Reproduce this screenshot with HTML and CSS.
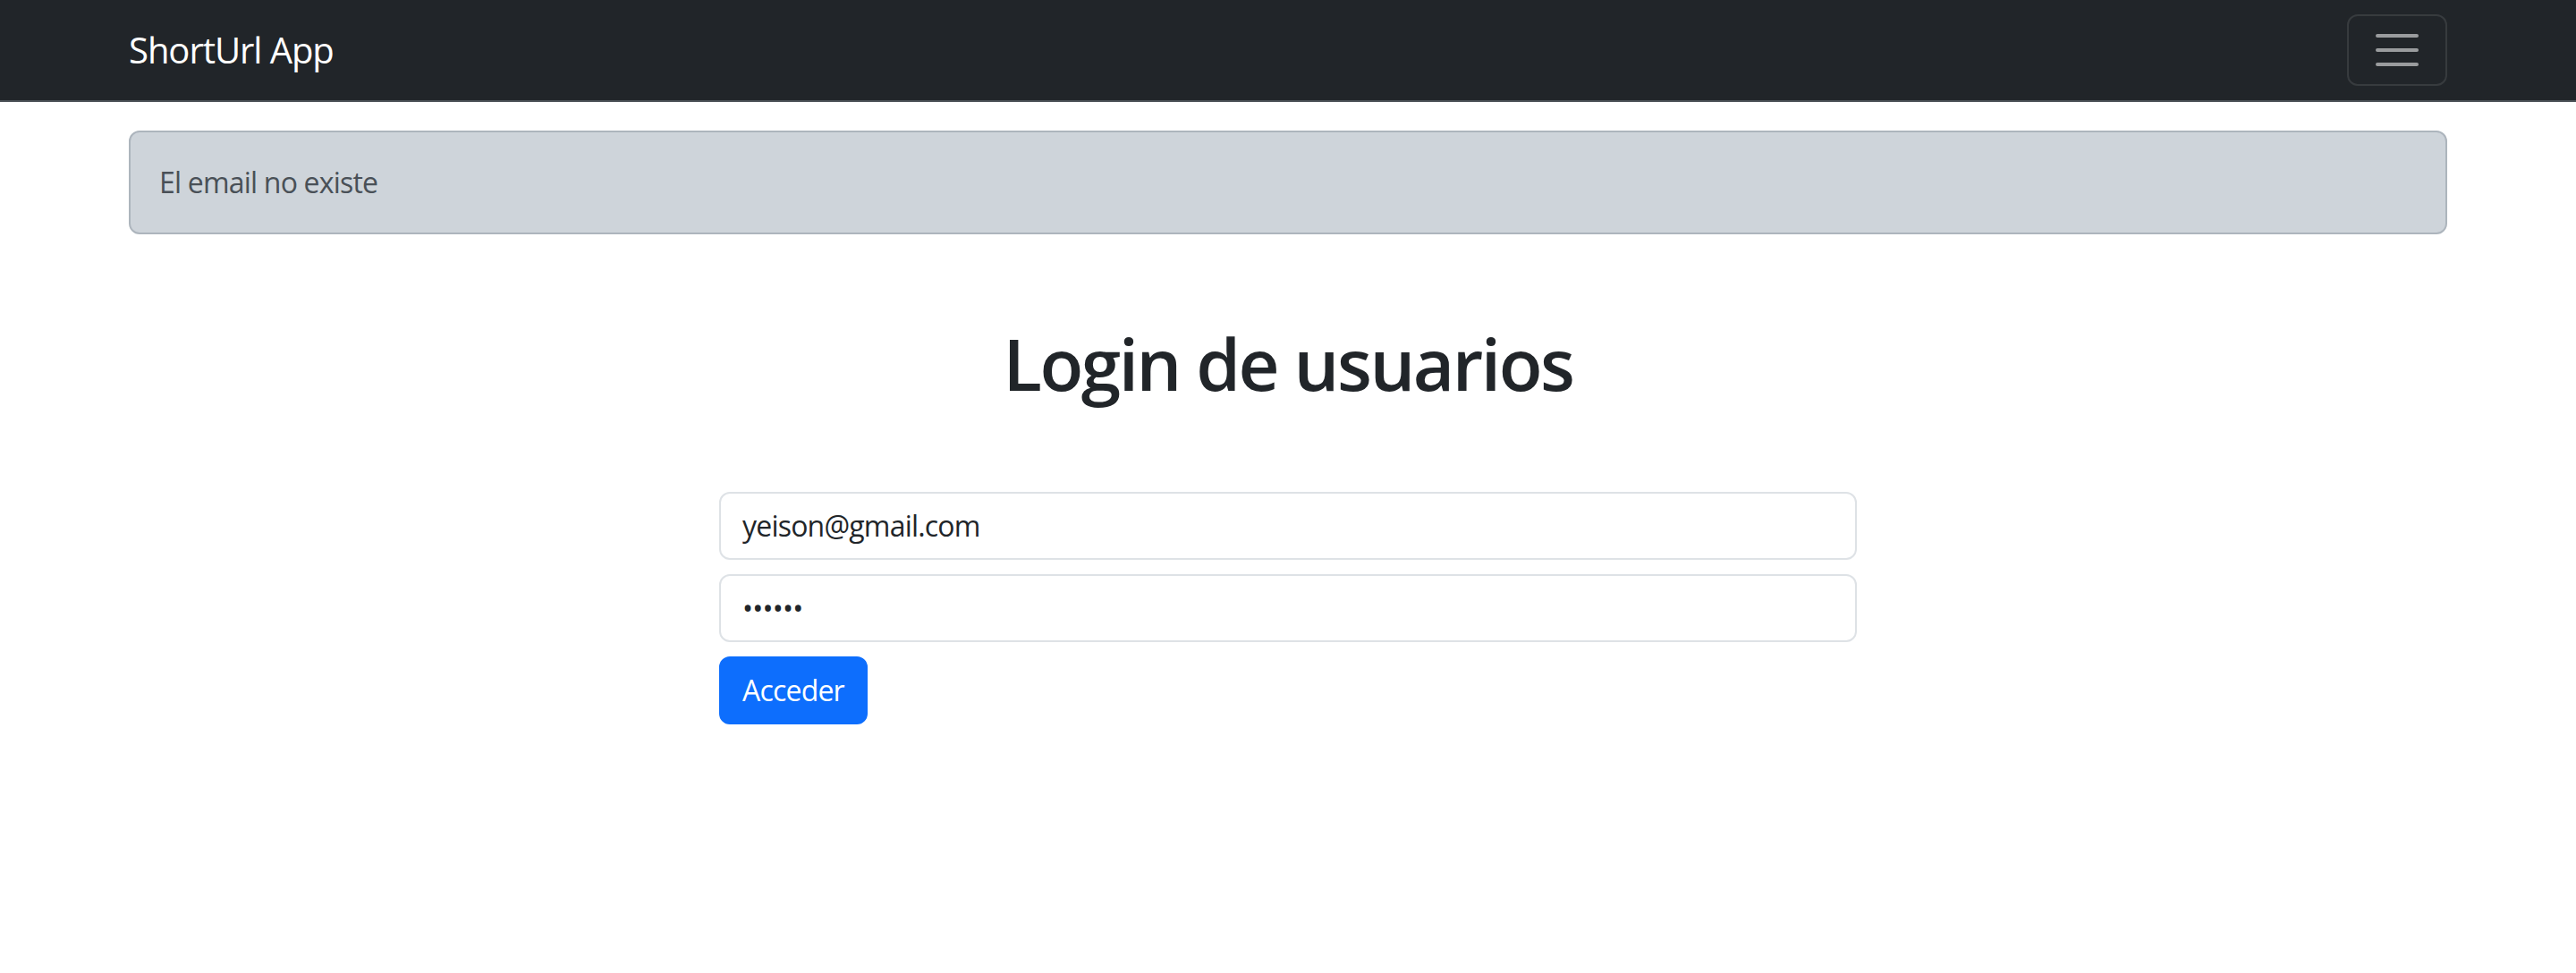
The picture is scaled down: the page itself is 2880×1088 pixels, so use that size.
FILE: index.html
```html
<!DOCTYPE html>
<html lang="es">
<head>
<meta charset="utf-8">
<title>ShortUrl App</title>
<link rel="stylesheet" href="styles.css">
</head>
<body>
<nav class="navbar">
  <div class="nav-inner">
    <a class="brand" href="#">ShortUrl App</a>
    <button class="toggler" type="button" aria-label="Toggle navigation">
      <svg class="toggler-icon" viewBox="0 0 30 30" xmlns="http://www.w3.org/2000/svg">
        <path d="M4 7h22M4 15h22M4 23h22" stroke="rgba(255,255,255,0.55)" stroke-width="2" stroke-linecap="round" stroke-miterlimit="10" fill="none"/>
      </svg>
    </button>
  </div>
</nav>
<main class="container">
  <div class="alert">El email no existe</div>
  <h1 class="title">Login de usuarios</h1>
  <form class="login-form">
    <input class="form-control" type="email" value="yeison@gmail.com">
    <input class="form-control" type="password" value="123456">
    <button class="btn-primary" type="submit">Acceder</button>
  </form>
</main>
</body>
</html>
```
FILE: styles.css
```css
* { box-sizing: border-box; }
html, body { margin: 0; padding: 0; }
body {
  font-family: "Open Sans", "Noto Sans", "Liberation Sans", sans-serif;
  font-size: 32px;
  line-height: 1.5;
  color: #212529;
  background: #ffffff;
  letter-spacing: -0.8px;
}
.navbar {
  background: #212529;
  padding: 16px 0;
  border-bottom: 2px solid #4a4f55;
}
.nav-inner {
  max-width: 2640px;
  margin: 0 auto;
  padding: 0 24px;
  display: flex;
  justify-content: space-between;
  align-items: center;
}
.brand {
  font-size: 40px;
  line-height: 60px;
  padding: 10px 0;
  color: #ffffff;
  text-decoration: none;
  letter-spacing: -1.05px;
}
.toggler {
  width: 112px;
  height: 80px;
  padding: 8px 24px;
  background: transparent;
  border: 2px solid rgba(255, 255, 255, 0.1);
  border-radius: 12px;
  display: flex;
  align-items: center;
  justify-content: center;
}
.toggler-icon {
  width: 60px;
  height: 60px;
  display: block;
}
.container {
  max-width: 2640px;
  margin: 0 auto;
  padding: 0 24px;
}
.alert {
  margin: 32px 0 32px;
  padding: 32px;
  background: #ced4da;
  border: 2px solid #adb5bd;
  border-radius: 12px;
  color: #495057;
}
.title {
  margin: 96px 0;
  font-size: 80px;
  font-weight: 600;
  line-height: 1.2;
  text-align: center;
  letter-spacing: -2.45px;
}
.login-form {
  width: 1272px;
  margin: 0 auto;
}
.form-control {
  display: block;
  width: 100%;
  margin: 0 0 16px;
  padding: 12px 24px;
  font: inherit;
  letter-spacing: inherit;
  line-height: 48px;
  color: #212529;
  background: #ffffff;
  border: 2px solid #dee2e6;
  border-radius: 12px;
  outline: none;
}
.btn-primary {
  display: inline-block;
  padding: 12px 24px;
  font: inherit;
  letter-spacing: inherit;
  line-height: 48px;
  color: #ffffff;
  background: #0d6efd;
  border: 2px solid #0d6efd;
  border-radius: 12px;
  cursor: pointer;
}
```
